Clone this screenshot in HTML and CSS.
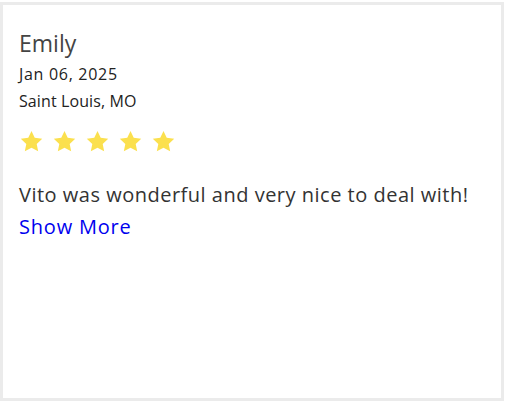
FILE: index.html
```html
<!DOCTYPE html>
<html>
<head>
<meta charset="utf-8">
<link rel="stylesheet" href="styles.css">
</head>
<body>
<div class="card">
  <div class="name">Emily</div>
  <div class="meta date">Jan 06, 2025</div>
  <div class="meta">Saint Louis, MO</div>
  <div class="stars">
    <svg class="star" viewBox="0 0 24 24"><path d="M12 1.8l3.1 6.6 7.2.9-5.3 5 1.4 7.1L12 17.9l-6.4 3.5 1.4-7.1-5.3-5 7.2-.9z"/></svg>
    <svg class="star" viewBox="0 0 24 24"><path d="M12 1.8l3.1 6.6 7.2.9-5.3 5 1.4 7.1L12 17.9l-6.4 3.5 1.4-7.1-5.3-5 7.2-.9z"/></svg>
    <svg class="star" viewBox="0 0 24 24"><path d="M12 1.8l3.1 6.6 7.2.9-5.3 5 1.4 7.1L12 17.9l-6.4 3.5 1.4-7.1-5.3-5 7.2-.9z"/></svg>
    <svg class="star" viewBox="0 0 24 24"><path d="M12 1.8l3.1 6.6 7.2.9-5.3 5 1.4 7.1L12 17.9l-6.4 3.5 1.4-7.1-5.3-5 7.2-.9z"/></svg>
    <svg class="star" viewBox="0 0 24 24"><path d="M12 1.8l3.1 6.6 7.2.9-5.3 5 1.4 7.1L12 17.9l-6.4 3.5 1.4-7.1-5.3-5 7.2-.9z"/></svg>
  </div>
  <p class="review">Vito was wonderful and very nice to deal with!</p>
  <a class="more" href="#">Show More</a>
</div>
</body>
</html>
```
FILE: styles.css
```css
html, body {
  margin: 0;
  background: #fff;
}
body {
  padding-top: 2px;
  font-family: "Open Sans", "Noto Sans", sans-serif;
}
.card {
  box-sizing: border-box;
  width: 504px;
  height: 399px;
  border: 3px solid #ebebeb;
  padding: 23px 16px 16px;
  display: flex;
  flex-direction: column;
  align-items: flex-start;
}
.name {
  font-size: 23px;
  line-height: 30px;
  margin-bottom: 3px;
  color: #444;
}
.meta {
  font-size: 16px;
  line-height: 27px;
  letter-spacing: 0.1px;
  color: #222;
}
.date {
  letter-spacing: 0.7px;
}
.stars {
  display: flex;
  gap: 8px;
  margin-top: 14px;
}
.star {
  width: 25px;
  height: 25px;
  fill: #fbe04e;
}
.review {
  margin: 25px 0 0;
  font-size: 20px;
  line-height: 32px;
  letter-spacing: 0.5px;
  color: #333;
}
.more {
  font-size: 20px;
  line-height: 32px;
  letter-spacing: 0.8px;
  color: #0000ee;
  text-decoration: none;
}
```
